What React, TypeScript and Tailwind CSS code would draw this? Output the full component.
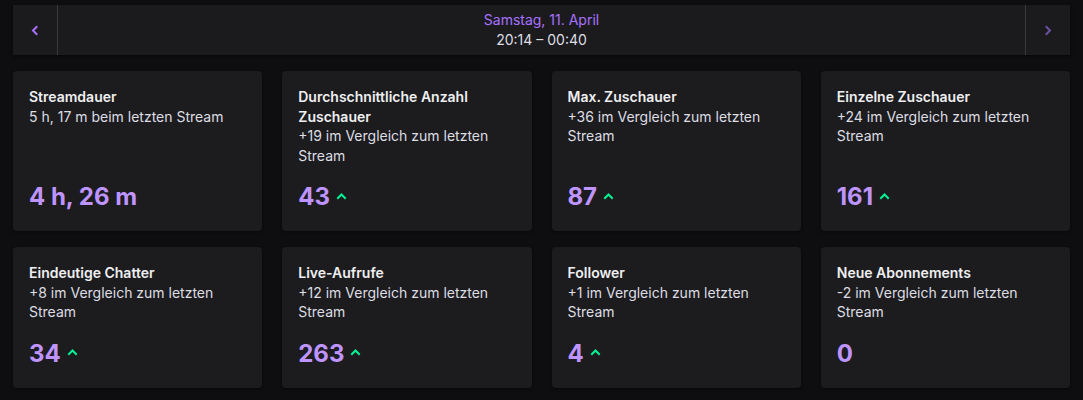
import * as React from 'react'

type Stat = {
  title: string
  subtitle: string
  value: string
  up?: boolean
}

const stats: Stat[] = [
  { title: 'Streamdauer', subtitle: '5 h, 17 m beim letzten Stream', value: '4 h, 26 m' },
  {
    title: 'Durchschnittliche Anzahl Zuschauer',
    subtitle: '+19 im Vergleich zum letzten Stream',
    value: '43',
    up: true,
  },
  { title: 'Max. Zuschauer', subtitle: '+36 im Vergleich zum letzten Stream', value: '87', up: true },
  { title: 'Einzelne Zuschauer', subtitle: '+24 im Vergleich zum letzten Stream', value: '161', up: true },
  { title: 'Eindeutige Chatter', subtitle: '+8 im Vergleich zum letzten Stream', value: '34', up: true },
  { title: 'Live-Aufrufe', subtitle: '+12 im Vergleich zum letzten Stream', value: '263', up: true },
  { title: 'Follower', subtitle: '+1 im Vergleich zum letzten Stream', value: '4', up: true },
  { title: 'Neue Abonnements', subtitle: '-2 im Vergleich zum letzten Stream', value: '0' },
]

const Chevron = ({ dir, className }: { dir: 'left' | 'right' | 'up'; className?: string }) => {
  const d =
    dir === 'left' ? 'M6.5 2 L3 5.5 L6.5 9' : dir === 'right' ? 'M3.5 2 L7 5.5 L3.5 9' : 'M2 7 L5.5 3.5 L9 7'
  return (
    <svg width="11" height="11" viewBox="0 0 11 11" className={className}>
      <path d={d} fill="none" stroke="currentColor" strokeWidth="2" strokeLinecap="square" />
    </svg>
  )
}

const StatCard = ({ stat }: { stat: Stat }) => (
  <div className="flex flex-col rounded bg-[#1c1c1f] px-4 pt-4 pb-[18px] shadow-[0_1px_3px_rgba(0,0,0,0.5)]">
    <div className="text-[14px] font-semibold leading-[19.5px] text-[#efeff1]">{stat.title}</div>
    <div className="text-[14px] leading-[19.5px] text-[#dedee3]">{stat.subtitle}</div>
    <div className="mt-auto flex items-center gap-[6px] pt-4">
      <span className="text-[24px] font-bold leading-[32px] text-[#bf94ff]">{stat.value}</span>
      {stat.up && <Chevron dir="up" className="mb-[2px] text-[#00f593]" />}
    </div>
  </div>
)

export default function App() {
  return (
    <div
      className="min-h-[400px] bg-[#0e0e10] px-[13px] pt-[5px] pb-3"
      style={{ fontFamily: 'Inter, "Noto Sans", sans-serif' }}
    >
      <div className="flex h-[50px] items-stretch bg-[#1b1b1e] shadow-[0_1px_3px_rgba(0,0,0,0.6)]">
        <button className="flex w-[45px] items-center justify-center border-r border-[#3a3a3d] text-[#a970ff]">
          <Chevron dir="left" />
        </button>
        <div className="flex flex-1 flex-col items-center justify-center text-[14px] leading-[20px]">
          <div className="text-[#a970ff]">Samstag, 11. April</div>
          <div className="text-[#dedee3]">20:14 – 00:40</div>
        </div>
        <button className="flex w-[45px] items-center justify-center border-l border-[#3a3a3d] text-[#6c4fa3]">
          <Chevron dir="right" />
        </button>
      </div>

      <div className="mt-4 grid grid-cols-4 gap-x-5 gap-y-4">
        {stats.map((s) => (
          <StatCard key={s.title} stat={s} />
        ))}
      </div>
    </div>
  )
}
